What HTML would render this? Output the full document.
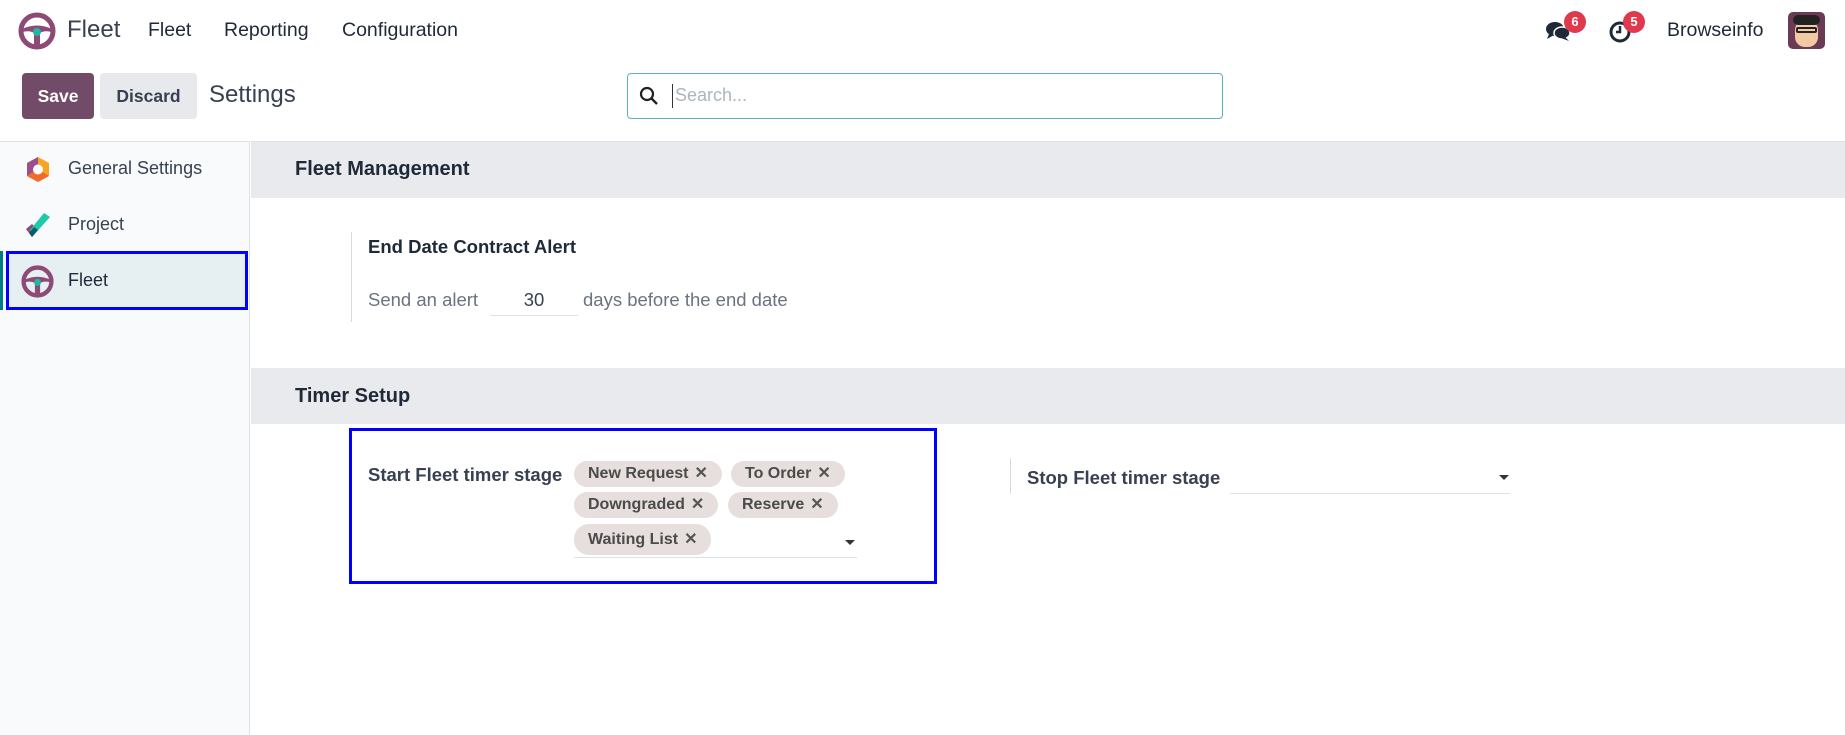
<!DOCTYPE html>
<html><head><meta charset="utf-8"><style>
*{box-sizing:border-box;margin:0;padding:0}
body{width:1845px;height:735px;overflow:hidden;background:#fff;font-family:"Liberation Sans",sans-serif;color:#374151;position:relative}
.a{position:absolute;white-space:nowrap}
.chip{position:absolute;background:#e7dfdd;border-radius:13px;height:26px;font-size:16px;font-weight:bold;color:#4b4b4b;line-height:26px;padding:0 14px}
.chip b{font-weight:bold;margin-left:6px;color:#555}
.caret{position:absolute;width:0;height:0;border-left:5px solid transparent;border-right:5px solid transparent;border-top:5px solid #333}
</style></head><body>
<svg class="a" style="left:18px;top:12px" width="38" height="38" viewBox="0 0 38 38"><circle cx="19" cy="19" r="16" fill="none" stroke="#8e4a76" stroke-width="5"/><path d="M4 17 Q19 10 34 17 L34 20 Q26 18 22 21 L22 35 L16 35 L16 21 Q12 18 4 20Z" fill="#8e4a76"/><circle cx="19" cy="20" r="4" fill="#21b5a5"/></svg>
<div class="a" style="left:67px;top:16px;font-size:24px;color:#374151">Fleet</div>
<div class="a" style="left:148px;top:19px;font-size:19.5px;color:#1f2937">Fleet</div>
<div class="a" style="left:224px;top:19px;font-size:19.5px;color:#1f2937">Reporting</div>
<div class="a" style="left:342px;top:19px;font-size:19.5px;color:#1f2937">Configuration</div>
<svg class="a" style="left:1545px;top:20px" width="26" height="22" viewBox="0 0 26 22"><ellipse cx="10" cy="9" rx="9" ry="7" fill="#1f2937"/><path d="M4 14 L2 19 L9 15Z" fill="#1f2937"/><ellipse cx="17" cy="13" rx="8" ry="6" fill="#1f2937" stroke="#fff" stroke-width="1.5"/><path d="M20 17 L24 21 L16 18Z" fill="#1f2937"/></svg>
<div class="a" style="left:1564px;top:11px;width:22px;height:22px;border-radius:11px;background:#e0394d;color:#fff;font-size:13px;font-weight:bold;text-align:center;line-height:22px">6</div>
<svg class="a" style="left:1608px;top:20px" width="24" height="24" viewBox="0 0 24 24"><circle cx="12" cy="12" r="9" fill="none" stroke="#1f2937" stroke-width="3"/><path d="M12 6 V12 H8" fill="none" stroke="#1f2937" stroke-width="2.5"/></svg>
<div class="a" style="left:1623px;top:11px;width:22px;height:22px;border-radius:11px;background:#e0394d;color:#fff;font-size:13px;font-weight:bold;text-align:center;line-height:22px">5</div>
<div class="a" style="left:1667px;top:19px;font-size:19.5px;color:#1f2937">Browseinfo</div>
<div class="a" style="left:1788px;top:12px;width:37px;height:37px;border-radius:5px;background:#6b3a55;overflow:hidden"><div style="position:absolute;left:7px;top:8px;width:23px;height:27px;border-radius:10px;background:#f3c9a4"></div><div style="position:absolute;left:5px;top:3px;width:27px;height:10px;border-radius:6px;background:#222"></div><div style="position:absolute;left:8px;top:15px;width:21px;height:6px;border:2px solid #222;border-radius:2px"></div></div>
<div class="a" style="left:22px;top:73px;width:72px;height:46px;background:#714b67;border-radius:4px;color:#fff;font-weight:bold;font-size:17.5px;text-align:center;line-height:46px">Save</div>
<div class="a" style="left:100px;top:73px;width:97px;height:46px;background:#e7e9ed;border-radius:4px;color:#374151;font-weight:bold;font-size:17.5px;text-align:center;line-height:46px">Discard</div>
<div class="a" style="left:209px;top:81px;font-size:24px;color:#374151">Settings</div>
<div class="a" style="left:627px;top:73px;width:596px;height:46px;border:1px solid #5fb1b8;border-radius:4px"></div>
<svg class="a" style="left:639px;top:86px" width="20" height="20" viewBox="0 0 20 20"><circle cx="8" cy="8" r="6" fill="none" stroke="#222" stroke-width="2.2"/><path d="M12.5 12.5 L18 18" stroke="#222" stroke-width="2.4"/></svg>
<div class="a" style="left:672px;top:84px;width:1px;height:24px;background:#333"></div>
<div class="a" style="left:675px;top:85px;font-size:18px;color:#adb5bd">Search...</div>
<div class="a" style="left:0;top:141px;width:250px;height:594px;background:#f9fafb;border-right:1px solid #dee2e6;border-top:1px solid #dee2e6"></div>
<svg class="a" style="left:25px;top:156px" width="26" height="27" viewBox="0 0 26 27"><path d="M13 1 L24 7 L24 20 L13 26 L2 20 L2 7Z" fill="#f5a623"/><path d="M13 1 L2 7 L2 20 L13 13Z" fill="#9b4f8b"/><path d="M2 20 L13 26 L24 20 L13 13Z" fill="#f26b2a"/><circle cx="13" cy="13.5" r="5" fill="#fff"/></svg>
<div class="a" style="left:68px;top:158px;font-size:18px;color:#374151">General Settings</div>
<svg class="a" style="left:24px;top:213px" width="28" height="26" viewBox="0 0 28 26"><path d="M2 16 L8 11 L14 17 L8 24Z" fill="#8e4a76"/><path d="M8 24 L26 4 L20 0 L6 17Z" fill="#20c9a9"/><path d="M8 24 L14 17 L10 14 L5 20Z" fill="#0a5a6e"/></svg>
<div class="a" style="left:68px;top:214px;font-size:18px;color:#374151">Project</div>
<div class="a" style="left:0;top:251px;width:3px;height:59px;background:#017e84"></div>
<div class="a" style="left:6px;top:251px;width:242px;height:59px;background:#e6f0f2;border:3px solid #0000ff"></div>
<svg class="a" style="left:21px;top:265px" width="33" height="33" viewBox="0 0 38 38"><circle cx="19" cy="19" r="16" fill="none" stroke="#8e4a76" stroke-width="5"/><path d="M4 17 Q19 10 34 17 L34 20 Q26 18 22 21 L22 35 L16 35 L16 21 Q12 18 4 20Z" fill="#8e4a76"/><circle cx="19" cy="20" r="4" fill="#21b5a5"/></svg>
<div class="a" style="left:68px;top:270px;font-size:18px;color:#1f2937">Fleet</div>
<div class="a" style="left:251px;top:141px;width:1594px;height:57px;background:#e9eaee;border-top:1px solid #dee2e6"></div>
<div class="a" style="left:295px;top:158px;font-size:20px;font-weight:bold;color:#1f2937">Fleet Management</div>
<div class="a" style="left:351px;top:232px;width:1px;height:90px;background:#d8dadd"></div>
<div class="a" style="left:368px;top:236px;font-size:18.5px;font-weight:bold;color:#1f2937">End Date Contract Alert</div>
<div class="a" style="left:368px;top:289px;font-size:18.5px;color:#6b7280">Send an alert</div>
<div class="a" style="left:490px;top:289px;width:88px;height:27px;border-bottom:1px solid #dee2e6;font-size:18.5px;color:#374151;text-align:center">30</div>
<div class="a" style="left:583px;top:289px;font-size:18.5px;color:#6b7280">days before the end date</div>
<div class="a" style="left:251px;top:368px;width:1594px;height:56px;background:#e9eaee"></div>
<div class="a" style="left:295px;top:385px;font-size:20px;font-weight:bold;color:#1f2937">Timer Setup</div>
<div class="a" style="left:349px;top:428px;width:588px;height:156px;border:3px solid #0000ff"></div>
<div class="a" style="left:368px;top:464px;font-size:18.5px;font-weight:bold;color:#374151">Start Fleet timer stage</div>
<div class="chip" style="left:574px;top:461px">New Request<b>✕</b></div>
<div class="chip" style="left:731px;top:461px">To Order<b>✕</b></div>
<div class="chip" style="left:574px;top:492px">Downgraded<b>✕</b></div>
<div class="chip" style="left:728px;top:492px">Reserve<b>✕</b></div>
<div class="chip" style="left:574px;top:524px;height:31px;line-height:31px;border-radius:15px">Waiting List<b>✕</b></div>
<div class="a" style="left:574px;top:557px;width:283px;height:1px;background:#dee2e6"></div>
<div class="caret" style="left:845px;top:540px"></div>
<div class="a" style="left:1010px;top:458px;width:1px;height:36px;background:#d8dadd"></div>
<div class="a" style="left:1027px;top:467px;font-size:18.5px;font-weight:bold;color:#374151">Stop Fleet timer stage</div>
<div class="a" style="left:1230px;top:493px;width:280px;height:1px;background:#dee2e6"></div>
<div class="caret" style="left:1499px;top:475px"></div>
</body></html>
